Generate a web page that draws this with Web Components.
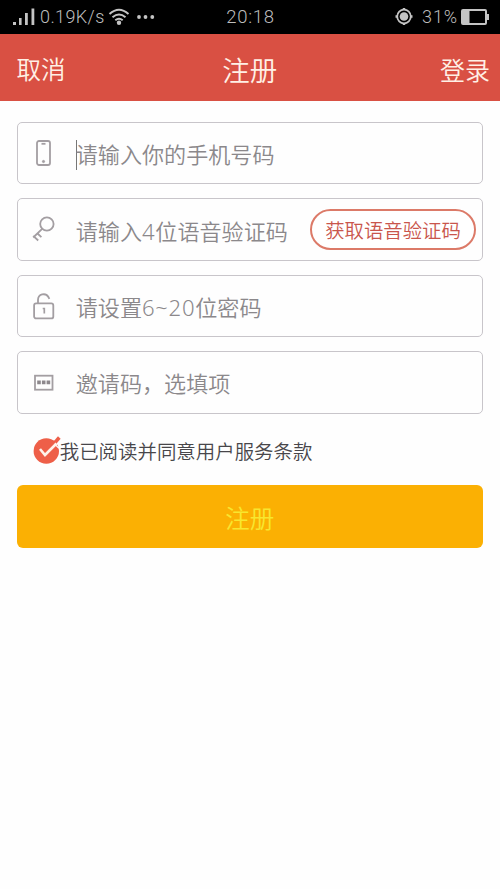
<!DOCTYPE html>
<html lang="zh-CN">
<head>
<meta charset="utf-8">
<title>注册</title>
<style>
html,body{margin:0;padding:0;background:#fefefe}
body{width:500px;height:889px;overflow:hidden;font-family:"Noto Sans CJK SC",sans-serif}
</style>
</head>
<body>
<register-page></register-page>
<script>
const define = (name, html) => {
  const t = document.createElement('template');
  t.innerHTML = html;
  customElements.define(name, class extends HTMLElement {
    constructor() {
      super();
      this.attachShadow({ mode: 'open' }).append(t.content.cloneNode(true));
    }
  });
};

define('status-bar', `
<style>
:host{display:grid;grid-template-columns:1fr auto 1fr;align-items:center;height:34px;box-sizing:border-box;padding:0 11px 0 12px;background:#000;color:#bdbdbd;font:300 18px/34px Roboto,sans-serif}
div{display:flex;align-items:center;height:34px}
svg{display:block;flex:none}
.r{justify-content:flex-end}
.speed{margin-left:5px;width:64px;letter-spacing:.4px;white-space:nowrap}
.time{letter-spacing:.7px;font-size:18.5px}
.pct{margin:0 3px 0 9px;letter-spacing:.9px}
</style>
<div>
  <svg width="23" height="34" viewBox="0 0 23 34" fill="#c4c4c4"><path d="M1 22h3v3H1zM7 18h2.600v7H7zM13 13h2.800v12H13zM19.500 8.500h2.800v16.500h-2.800z"/></svg>
  <span class="speed">0.19K/s</span>
  <svg style="margin-left:4px" width="22" height="34" viewBox="0 0 22 34" fill="none" stroke="#c4c4c4" stroke-width="2"><path d="M1.500 14Q11 5.500 20.500 14M4.500 17.300Q11 11.800 17.500 17.300M7.300 20.300Q11 17.300 14.700 20.300"/><circle cx="11" cy="22.700" r="2.200" fill="#c4c4c4" stroke="none"/></svg>
  <svg style="margin-left:6px" width="20" height="34" viewBox="0 0 20 34" fill="#c4c4c4"><circle cx="3" cy="17" r="1.900"/><circle cx="9.500" cy="17" r="1.900"/><circle cx="16.300" cy="17" r="1.900"/></svg>
</div>
<span class="time">20:18</span>
<div class="r">
  <svg width="18" height="34" viewBox="0 0 18 34"><circle cx="9" cy="16.500" r="6.800" fill="none" stroke="#c4c4c4" stroke-width="1.800"/><circle cx="9" cy="16.500" r="4.300" fill="#c4c4c4"/><path d="M9 8v2M9 23v2M.5 16.500h2M15.500 16.500h2" stroke="#c4c4c4" stroke-width="2.500"/></svg>
  <span class="pct">31%</span>
  <svg width="28" height="34" viewBox="0 0 28 34"><rect x="1" y="10" width="24" height="14" rx="1" fill="none" stroke="#c4c4c4" stroke-width="2"/><path d="M1 10h7.500v14H1zM26 14h2v6h-2z" fill="#c4c4c4"/></svg>
</div>`);

define('nav-bar', `
<style>
:host{display:grid;grid-template-columns:1fr auto 1fr;align-items:center;height:66.500px;box-sizing:border-box;padding:3px 10px 0 16.500px;background:#d95043;color:#fff0e6;font-size:24.500px;font-weight:350;line-height:64px}
.t{font-size:27.500px;transform:translate(-3.500px,-.5px)}
.e{text-align:right;font-size:25px}
</style>
<span><slot name="start"></slot></span><span class="t"><slot></slot></span><span class="e"><slot name="end"></slot></span>`);

define('form-field', `
<style>
:host{display:flex;align-items:center;height:62.400px;box-sizing:border-box;border:1.500px solid #c8c5ca;border-radius:5px;padding:0 6px 0 13.500px;color:#8b888b;font-size:22.100px;font-weight:350;line-height:62px;white-space:nowrap}
.i{display:flex;width:28px;margin-right:16.500px}
.t{flex:1;height:58px;line-height:58px}
:host([focused]) .t::before{content:"";display:inline-block;width:1px;height:30px;background:#777;vertical-align:-7px;margin-right:-1px}
</style>
<span class="i"><slot name="icon"></slot></span><span class="t"><slot></slot></span><slot name="action"></slot>`);

define('field-icon', `
<style>
:host{display:block;width:28px;height:30px}
svg{display:none;fill:none;stroke:#a39ea2;stroke-width:1.800}
:host([name=phone]) .phone,:host([name=key]) .key,:host([name=lock]) .lock,:host([name=code]) .code{display:block}
</style>
<svg class="phone" width="28" height="30" viewBox="0 0 28 30"><rect x="6" y="3" width="13" height="24" rx="2"/><path d="M10.500 5.800h4"/><circle cx="12.500" cy="23.500" r="1.100" fill="#a39ea2" stroke-width="1"/></svg>
<svg class="key" width="28" height="30" viewBox="0 0 28 30"><circle cx="15.900" cy="9" r="6.700"/><path d="M11.400 13.700L2.200 22.500M2.200 20.800l5 4.700M6.500 18.500l3.900 3.700"/></svg>
<svg class="lock" width="28" height="30" viewBox="0 0 28 30"><rect x="3.100" y="12.400" width="19.200" height="15" rx="2"/><path d="M7 12V8.700a5.600 5.600 0 0 1 10.400-2.700l1 1.900"/><path d="M11.700 17.500h1.600v5" stroke-width="1.700"/></svg>
<svg class="code" width="28" height="30" viewBox="0 0 28 30"><rect x="4" y="8.700" width="17.500" height="14"/><path d="M6.200 13.500h3.600v3.800H6.200zM10.900 13.500h3.600v3.800h-3.600zM15.600 13.500h3.600v3.800h-3.600z" fill="#8d888c" stroke="none"/></svg>`);

define('pill-button', `
<style>
:host{display:block;box-sizing:border-box;width:166px;height:41px;border:2px solid #dc7a68;border-radius:21px;color:#c9564c;font-size:19.400px;font-weight:350;line-height:37px;text-align:center;background:#fff}
</style><slot></slot>`);

define('agree-check', `
<style>
:host{display:flex;align-items:center;height:30px;margin:22px 0 19.500px 16px;color:#48464a;font-size:19.450px;font-weight:350;line-height:30px}
svg{flex:none;overflow:visible}
span{padding-top:1px}
</style>
<svg width="27" height="30" viewBox="0 0 27 30"><circle cx="13.300" cy="15" r="12.700" fill="#ee5f48"/><path d="M19 10L26.300 1.500" stroke="#ee5f48" stroke-width="3.500"/><path d="M21.500 8L26 12.200" stroke="#fefefe" stroke-width="1.200"/><path d="M7 13l5 6L23.500 7.500" fill="none" stroke="#fff3ea" stroke-width="2.600"/></svg><span><slot></slot></span>`);

define('submit-button', `
<style>
:host{display:block;height:62.500px;border-radius:6px;background:#fbb003;color:#f8e62f;font-size:24.500px;font-weight:350;line-height:65px;text-align:center}
</style><slot></slot>`);

define('register-page', `
<style>
:host{display:block;width:500px;height:889px;background:#fefefe}
main{padding:21.500px 17px 0 16.700px}
.fields{display:grid;gap:14px}
.w{font-family:"Noto Sans",sans-serif;font-weight:300;letter-spacing:.7px}
</style>
<status-bar></status-bar>
<nav-bar><span slot="start">取消</span>注册<span slot="end">登录</span></nav-bar>
<main>
  <div class="fields">
    <form-field focused><field-icon slot="icon" name="phone"></field-icon>请输入你的手机号码</form-field>
    <form-field><field-icon slot="icon" name="key"></field-icon>请输入<span class="w">4</span>位语音验证码<pill-button slot="action">获取语音验证码</pill-button></form-field>
    <form-field><field-icon slot="icon" name="lock"></field-icon>请设置<span class="w">6~20</span>位密码</form-field>
    <form-field><field-icon slot="icon" name="code"></field-icon>邀请码，选填项</form-field>
  </div>
  <agree-check>我已阅读并同意用户服务条款</agree-check>
  <submit-button>注册</submit-button>
</main>`);
</script>
</body>
</html>
